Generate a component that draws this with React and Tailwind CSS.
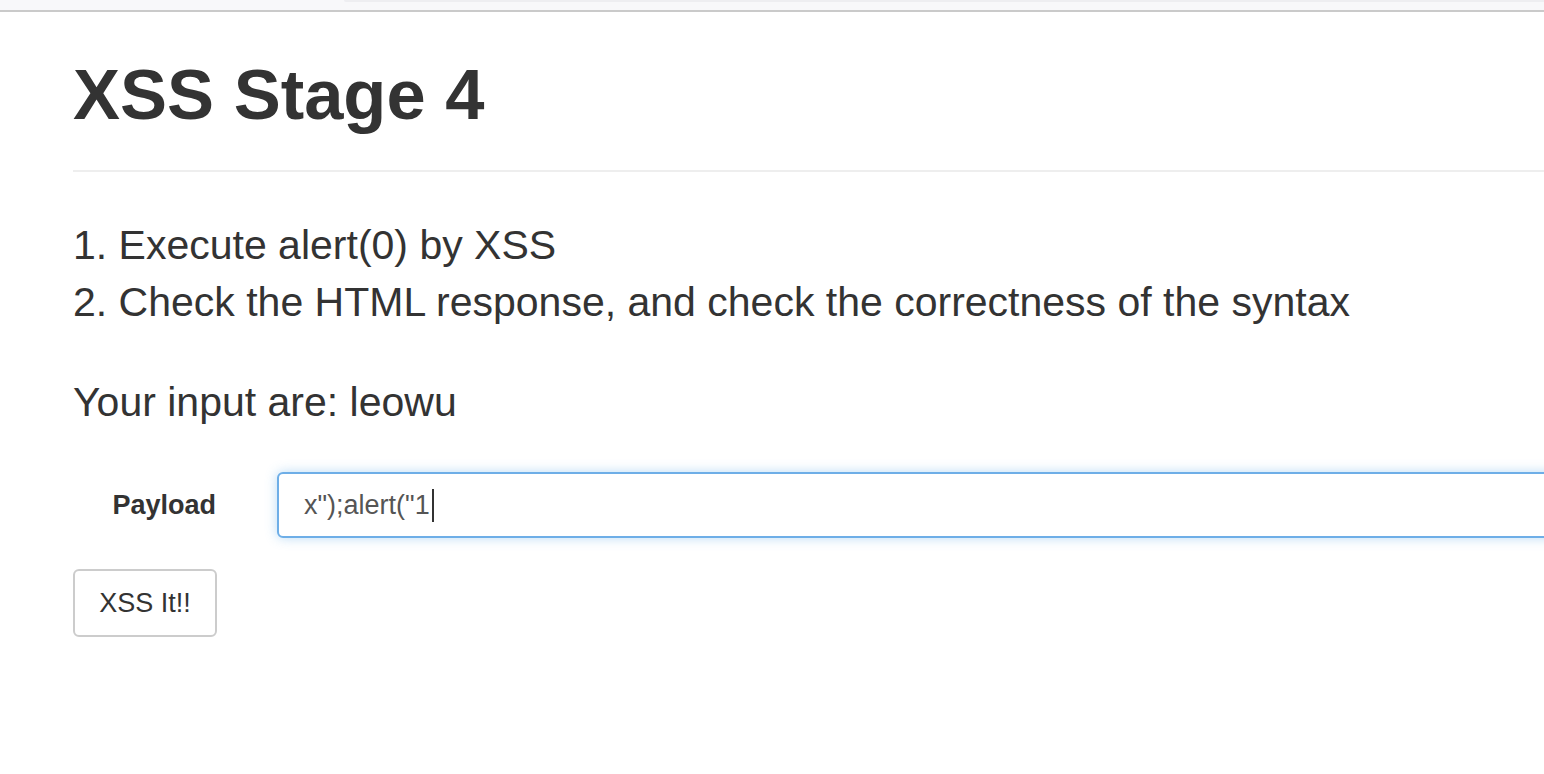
import React from 'react';

const font = { fontFamily: '"Liberation Sans", Arial, Helvetica, sans-serif' };

export default function App() {
  return (
    <div className="min-h-screen w-full overflow-hidden bg-white text-[#333]" style={font}>
      {/* browser chrome strip */}
      <div className="relative h-[10px] bg-[#f8f8fa]">
        <div className="absolute right-0 top-0 h-[2px] w-[calc(100%-344px)] rounded-bl-[3px] bg-[#eeeef1]" />
      </div>
      <div className="h-[2px] bg-[#cacaca]" />

      <div className="pl-[73px]">
        <h1 className="mt-[45px] text-[70.5px] font-bold leading-[76px] text-[#333]">XSS Stage 4</h1>
        <div className="mt-[37px] h-[2px] w-[1600px] bg-[#eeeeee]" />

        <ol className="mt-[45px] text-[41px] leading-[57px]">
          <li>1. Execute alert(0) by XSS</li>
          <li>2. Check the HTML response, and check the correctness of the syntax</li>
        </ol>

        <p className="mt-[43px] text-[41px] leading-[57px]">Your input are: leowu</p>

        <form className="mt-[41px]" onSubmit={(e) => e.preventDefault()}>
          <div className="flex items-center gap-[61px]">
            <label className="w-[143px] shrink-0 text-right text-[27px] font-bold leading-none">Payload</label>
            <div className="flex h-[66px] w-[1400px] shrink-0 items-center rounded-[6px] border-2 border-[#6eaee7] bg-white px-[25px] text-[27px] text-[#555] shadow-[0_0_12px_rgba(102,175,233,0.45)]">
              <span>x");alert("1</span>
              <span className="ml-[2px] inline-block h-[33px] w-[2px] bg-[#333]" />
            </div>
          </div>
          <button
            type="submit"
            className="mt-[31px] flex h-[68px] w-[144px] items-center justify-center rounded-[6px] border-2 border-[#cccccc] bg-white text-[27px] text-[#333]"
          >
            XSS It!!
          </button>
        </form>
      </div>
    </div>
  );
}
